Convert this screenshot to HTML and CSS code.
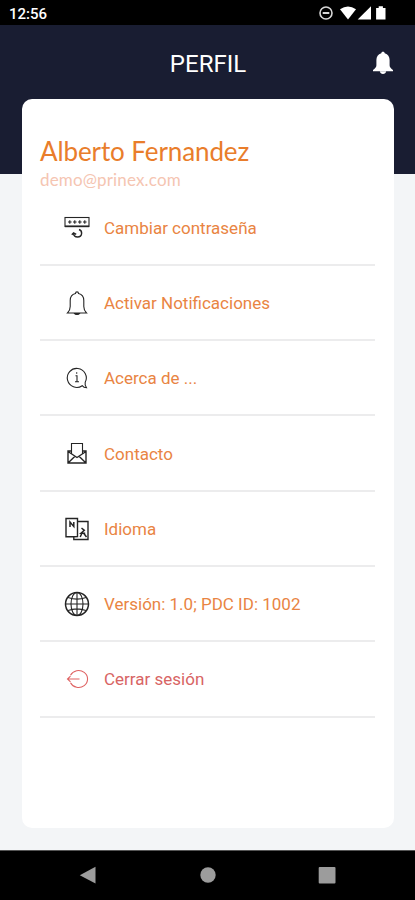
FILE: index.html
```html
<!DOCTYPE html>
<html lang="es">
<head>
<meta charset="utf-8">
<title>Perfil</title>
<link rel="stylesheet" href="styles.css">
</head>
<body>
<div class="status">
  <span class="clock">12:56</span>
  <svg class="status-icons" width="72" height="16" viewBox="0 0 72 16">
    <circle cx="8" cy="8" r="6" fill="none" stroke="#d8d8d8" stroke-width="1.6"/>
    <path d="M4.7 8h6.6" stroke="#d8d8d8" stroke-width="2"/>
    <path d="M22 4.2Q30 -1.4 38 4.2L30 14.5Z" fill="#fff"/>
    <path d="M53 1.2V14.5H39.7Z" fill="#fff"/>
    <path d="M59.6 3h2.6V1.2h4.2V3h2.6v11.5h-9.4Z" fill="#fff" transform="translate(-1.500 0)"/>
  </svg>
</div>
<main class="screen">
  <header class="header">
    <h1 class="title">PERFIL</h1>
    <svg class="alert" width="22" height="24" viewBox="0 0 22 24" fill="#fff">
      <path d="M11 .7c1.1 0 1.7.7 1.7 1.6 3.3 1 4.900 3.600 4.900 6.800v5.100c0 2.200 1.500 3.200 3.400 4.800v1.200H1V19c1.900-1.600 3.400-2.600 3.400-4.800V9.100c0-3.200 1.600-5.800 4.900-6.800C9.300 1.400 9.900.7 11 .7Z"/>
      <path d="M7.800 20.200h6.400c-.4 1.800-1.500 2.800-3.200 2.800s-2.800-1-3.200-2.800Z"/>
    </svg>
  </header>
  <section class="card">
    <h2 class="name">Alberto Fernandez</h2>
    <p class="email">demo@prinex.com</p>
    <ul class="menu">
      <li class="item">
        <svg class="icon" viewBox="0 0 26 26">
          <rect x="1" y="2.500" width="24" height="9" stroke-width="1.100"/>
          <path d="M1 11.300h24" stroke-width="1.700"/>
          <path d="M4 7h3.600M9 7h3.600M14 7h3.600M19 7h3.600M5.800 5.300v3.400M10.800 5.300v3.400M15.800 5.300v3.400M20.800 5.300v3.400"/>
          <path d="M15 14.500c3.800 1.200 3.600 7.500-1.400 7.500-2.600 0-4-1.600-4-3.700M7.800 19.800l1.800-2 2.600 1.600" stroke-width="1.400"/>
        </svg>
        <span class="label">Cambiar contraseña</span>
      </li>
      <li class="item">
        <svg class="icon" viewBox="0 0 26 26">
          <path d="M11.500 3.500c0-2.200 3-2.200 3 0 3.700.9 5.300 3.600 5.300 7v6c0 3 .6 4.400 2.700 6.500h-19c2.100-2.100 2.700-3.500 2.700-6.500v-6c0-3.400 1.600-6.100 5.300-7Z"/>
          <path d="M10.500 23.500c.7 1.200 4.300 1.200 5 0Z" fill="#252525"/>
        </svg>
        <span class="label">Activar Notificaciones</span>
      </li>
      <li class="item">
        <svg class="icon" viewBox="0 0 26 26">
          <path d="M18.200 20.700a9.500 9.500 0 1 1 3-3.400c-.5 1.800 0 3.500 1.300 5.500-1.800 0-3.200-.6-4.300-2.100Z"/>
          <path d="M11.500 10.800H13v5.800M11 16.800h4M12.700 7.300v1.500"/>
        </svg>
        <span class="label">Acerca de ...</span>
      </li>
      <li class="item">
        <svg class="icon" viewBox="0 0 26 26">
          <path d="M7.500 13V2.500h11V13"/>
          <path d="M7.500 10H4v12h18V10h-3.500M4 10.500l9 6 9-6M4 22l7-6.700M22 22l-7-6.700" stroke-width="1.400"/>
        </svg>
        <span class="label">Contacto</span>
      </li>
      <li class="item">
        <svg class="icon" viewBox="0 0 26 26">
          <path d="M2 2.500h11.500v18L9.500 20.700H2ZM13.500 5.500h10.500v18H9.800v-2.800" stroke-width="1.400"/>
          <path d="M6 11V6l3.800 4.500V6M17.500 12l2.800 2.300-3.300 2.900h4.200M18.500 16l-2.300 5M19.500 17l3 4" stroke-width="1.500"/>
        </svg>
        <span class="label">Idioma</span>
      </li>
      <li class="item">
        <svg class="icon" viewBox="0 0 26 26">
          <circle cx="13" cy="13" r="11.500" stroke-width="1.500"/>
          <ellipse cx="13" cy="13" rx="6" ry="11.500"/>
          <path d="M13 1.500v23M1.500 13h23M4 6.500c5.500 2 12.500 2 18 0M4 19.500c5.500-2 12.500-2 18 0"/>
        </svg>
        <span class="label">Versión: 1.0; PDC ID: 1002</span>
      </li>
      <li class="item exit">
        <svg class="icon" viewBox="0 0 26 26">
          <path d="M6.500 9.200a9 8.500 0 1 1 0 7.600M15.500 13H3.500M6.500 10.200L3.500 13l3 2.800"/>
        </svg>
        <span class="label">Cerrar sesión</span>
      </li>
    </ul>
  </section>
</main>
<nav class="nav">
  <svg width="18" height="18" viewBox="0 0 18 18"><path d="M16.500.8v16.700L.8 9.200Z"/></svg>
  <svg width="18" height="18" viewBox="0 0 18 18"><circle cx="9" cy="9" r="7.700"/></svg>
  <svg width="18" height="18" viewBox="0 0 18 18"><rect x=".7" y=".9" width="16.800" height="16.500" rx="1"/></svg>
</nav>
</body>
</html>
```
FILE: styles.css
```css
* { box-sizing: border-box; }
body {
  margin: 0;
  height: 900px;
  display: flex;
  flex-direction: column;
  background: #f3f5f7;
  font-family: Roboto, "Liberation Sans", sans-serif;
}
h1, h2, p, ul { margin: 0; padding: 0; }
.status {
  height: 25px;
  background: #000;
  display: flex;
  justify-content: space-between;
  padding: 5px 25px 0 9px;
}
.clock {
  color: #fff;
  font-size: 15px;
  font-weight: 500;
  line-height: 18px;
}
.status-icons { display: block; }
.screen {
  height: 825px;
  padding: 0 21px 22px 22px;
  background: linear-gradient(#191d32 149px, #f3f5f7 149px);
}
.header {
  height: 74px;
  display: grid;
  grid-template-columns: 22px 1fr 22px;
  align-items: center;
}
.title {
  grid-column: 2;
  text-align: center;
  font-size: 24px;
  line-height: 26px;
  font-weight: 400;
  color: #fff;
  padding-top: 4px;
}
.alert { margin-top: 2px; }
.card {
  height: 729px;
  border-radius: 10px;
  background: #fff;
  padding: 36px 19px 0 18px;
}
.name {
  font: 400 26px/32px Lato, sans-serif;
  letter-spacing: -0.100px;
  color: #e97d2b;
  white-space: nowrap;
}
.email {
  font: 400 17px/24px Lato, sans-serif;
  letter-spacing: 0.150px;
  padding-top: 1px;
  height: 24px;
  color: #f5c5b2;
}
.menu { list-style: none; }
.item {
  height: 75.330px;
  display: flex;
  align-items: center;
  padding: 1px 0 0 24px;
  border-bottom: 2px solid #ececed;
}
.item:first-child { height: 74.700px; }
.icon {
  width: 26px;
  height: 26px;
  margin-right: 14px;
  fill: none;
  stroke: #252525;
  stroke-width: 1.100;
}
.label {
  font-size: 17px;
  line-height: 22px;
  color: #e98443;
  white-space: nowrap;
}
.exit .icon { stroke: #df6262; }
.exit .label { color: #d86464; }
.nav {
  height: 50px;
  background: #000;
  border-top: 1px solid #555;
  display: flex;
  justify-content: space-between;
  align-items: center;
  padding: 0 79px 1px;
  fill: #9c9c9c;
}
```
